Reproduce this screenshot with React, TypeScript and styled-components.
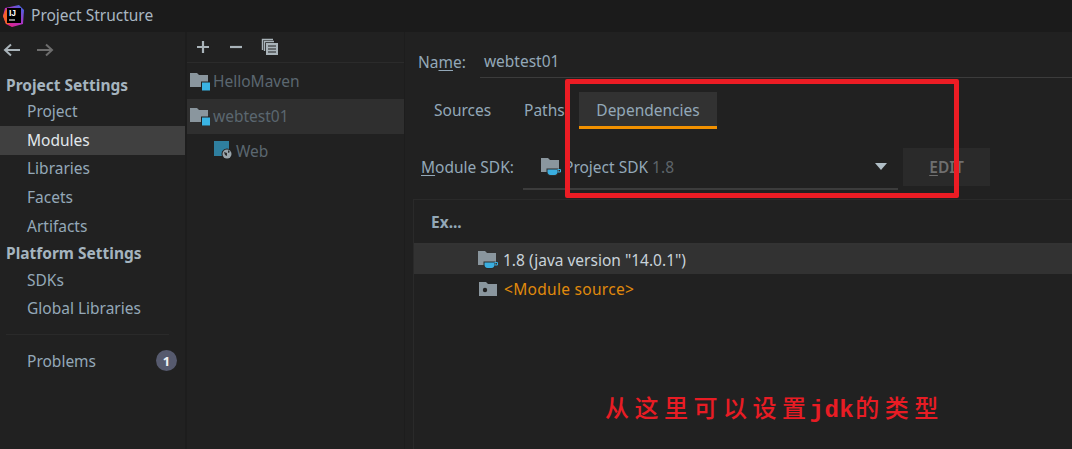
import React from "react";
import styled, { createGlobalStyle } from "styled-components";

const Global = createGlobalStyle`
  html, body { margin: 0; padding: 0; background: #212121; }
  * { box-sizing: border-box; }
`;

const Window = styled.div`
  position: relative;
  width: 1072px;
  height: 449px;
  overflow: hidden;
  background: #212121;
  color: #a5b4bf;
  font-family: "Noto Sans", "Open Sans", "Noto Sans CJK SC", sans-serif;
  font-size: 15.5px;
  display: flex;
  flex-direction: column;
`;
const TitleBar = styled.div`
  height: 32px;
  flex: none;
  background: #1b1b1b;
  display: flex;
  align-items: center;
  gap: 6px;
  padding: 0 0 2px 2px;
  color: #a9b7c2;
`;
const Body = styled.div`
  flex: 1;
  display: flex;
  min-height: 0;
`;
const Sidebar = styled.aside`
  width: 187px;
  flex: none;
  border-right: 2px solid #1d1d1d;
  display: flex;
  flex-direction: column;
`;
const NavBar = styled.div`
  height: 40px;
  display: flex;
  align-items: center;
  gap: 15px;
  padding: 0 0 4px 3px;
`;
const SectionTitle = styled.div`
  height: 25.5px;
  display: flex;
  align-items: center;
  padding-left: 6px;
  font-weight: 700;
  color: #a5b4bf;
`;
const NavItem = styled.div<{ $active?: boolean }>`
  height: 28.6px;
  display: flex;
  align-items: center;
  padding: 0 8px 1px 27px;
  color: ${(p) => (p.$active ? "#e2e8ec" : "#94a8b8")};
  background: ${(p) => (p.$active ? "#404040" : "transparent")};
`;
const NavRule = styled.div`
  height: 1px;
  margin: 11px 16px 12px 6px;
  background: #2a2a2a;
`;
const Badge = styled.span`
  margin-left: auto;
  width: 21px;
  height: 21px;
  border-radius: 50%;
  background: #565a6e;
  color: #eef0f2;
  font-size: 13px;
  font-weight: 700;
  display: flex;
  align-items: center;
  justify-content: center;
`;
const ModuleColumn = styled.section`
  width: 218px;
  flex: none;
  border-right: 1px solid #1d1d1d;
  display: flex;
  flex-direction: column;
`;
const ModuleTools = styled.div`
  height: 31px;
  flex: none;
  border-bottom: 1px solid #2b2b2b;
  display: flex;
  align-items: center;
  gap: 17px;
  padding: 0 0 1px 8px;
  margin-bottom: 1px;
`;
const TreeRow = styled.div<{ $active?: boolean; $indent?: number; $gap?: number }>`
  height: 35px;
  display: flex;
  align-items: center;
  gap: ${(p) => p.$gap ?? 3}px;
  padding: 0 0 2px ${(p) => p.$indent ?? 3}px;
  color: #5b6770;
  background: ${(p) => (p.$active ? "#2f2f2f" : "transparent")};
`;
const Details = styled.main`
  flex: 1;
  min-width: 0;
  display: flex;
  flex-direction: column;
`;
const NameRow = styled.div`
  height: 46px;
  flex: none;
  padding: 13px 0 0 13px;
  display: flex;
  align-items: center;
  gap: 14px;
`;
const FieldLabel = styled.span`
  color: #93a8b8;
`;
const Underlined = styled.span`
  text-decoration: underline;
  text-underline-offset: 2px;
  text-decoration-thickness: 1px;
`;
const NameField = styled.div`
  flex: 1;
  height: 33px;
  padding: 0 0 0 4px;
  display: flex;
  align-items: center;
  border-bottom: 1px solid #3c3c3c;
  color: #93a8b8;
`;
const Tabs = styled.div`
  display: flex;
  margin: 14px 0 0 29px;
  height: 37px;
  flex: none;
  align-items: stretch;
`;
const Tab = styled.div<{ $active?: boolean; $width: number }>`
  width: ${(p) => p.$width}px;
  display: flex;
  align-items: center;
  padding-top: 2px;
  justify-content: ${(p) => (p.$active ? "center" : "flex-start")};
  color: #93a8b8;
  background: ${(p) => (p.$active ? "#323232" : "transparent")};
  border-bottom: 3px solid ${(p) => (p.$active ? "#f29100" : "transparent")};
`;
const SdkRow = styled.div`
  height: 38px;
  margin-top: 20px;
  flex: none;
  display: flex;
  align-items: center;
  padding-left: 16px;
`;
const SdkLabel = styled(FieldLabel)`
  width: 102px;
  flex: none;
  padding-bottom: 2px;
`;
const SdkSelect = styled.div`
  width: 375px;
  height: 41px;
  margin-top: 3px;
  flex: none;
  display: flex;
  align-items: center;
  gap: 3px;
  padding: 0 11px 4px 18px;
  border-bottom: 2px solid #3c3c3c;
  color: #93a8b8;
`;
const Muted = styled.span`
  color: #5d6469;
`;
const Caret = styled.span`
  margin-left: auto;
  width: 0;
  height: 0;
  border-left: 6px solid transparent;
  border-right: 6px solid transparent;
  border-top: 7px solid #b0bec6;
`;
const EditButton = styled.div`
  width: 87px;
  height: 38px;
  margin: 0 0 2px 5px;
  background: #2a2a2a;
  color: #6f6f6f;
  font-weight: 600;
  display: flex;
  align-items: center;
  justify-content: center;
`;
const TablePanel = styled.div`
  margin: 12px 0 0 8px;
  flex: 1;
  border-top: 1px solid #2a2a2a;
  border-left: 1px solid #2a2a2a;
  display: flex;
  flex-direction: column;
`;
const TableHead = styled.div`
  height: 45px;
  flex: none;
  border-bottom: 2px solid #333;
  padding-left: 17px;
  display: flex;
  align-items: center;
  font-weight: 700;
  color: #93a8b8;
`;
const TableRow = styled.div<{ $active?: boolean }>`
  height: 29px;
  flex: none;
  display: flex;
  align-items: center;
  gap: 5px;
  padding-left: 64px;
  background: ${(p) => (p.$active ? "#323232" : "transparent")};
  color: #c9d3da;
`;
const SourceText = styled.span`
  color: #e08a0c;
  margin-left: 1px;
  letter-spacing: 0.3px;
`;
const Highlight = styled.div`
  position: absolute;
  left: 565px;
  top: 79px;
  width: 394px;
  height: 119px;
  border: 5px solid #ec1c24;
  border-radius: 2px;
  pointer-events: none;
`;
const Note = styled.div`
  position: absolute;
  left: 605px;
  top: 389px;
  color: #e81c24;
  font-family: "Noto Sans CJK SC", sans-serif;
  font-size: 24px;
  font-weight: 500;
  line-height: 36px;
  letter-spacing: 5.5px;
  white-space: nowrap;
`;
const NoteLatin = styled.span`
  font-family: "Liberation Mono", monospace;
  font-weight: 700;
  letter-spacing: 0.5px;
  margin: 0 1px 0 -2px;
`;

const Logo = () => (
  <svg width="23" height="24" viewBox="0 0 23 24">
    <defs>
      <linearGradient id="lg" x1="0" y1="1" x2="1" y2="0">
        <stop offset="0" stopColor="#f5206a" />
        <stop offset="0.5" stopColor="#b42fc0" />
        <stop offset="1" stopColor="#2f6fe8" />
      </linearGradient>
    </defs>
    <path d="M3 5 L17 2 L22 7 L21 21 L10 24 L4 21 L1 13 Z" fill="url(#lg)" />
    <path d="M1 13 L4 6 L7 8 L8 21 L4 21 Z" fill="#f4622a" />
    <rect x="5" y="5" width="14" height="15" fill="#000" />
    <text x="7" y="13" fontSize="8.500" fontWeight="700" fill="#fff" fontFamily="Liberation Sans">IJ</text>
    <rect x="7" y="16.500" width="6" height="1" fill="#fff" />
  </svg>
);
const Arrow = ({ flip, color }: { flip?: boolean; color: string }) => (
  <svg width="18" height="14" viewBox="0 0 18 14" style={{ transform: flip ? "scaleX(-1)" : undefined }}>
    <path d="M17 7H2M8 1.500L2 7l6 5.500" fill="none" stroke={color} strokeWidth="2" />
  </svg>
);
const Plus = () => (
  <svg width="16" height="16" viewBox="0 0 16 16"><path d="M8 2v12M2 8h12" stroke="#a9b3b9" strokeWidth="2.200" /></svg>
);
const Minus = () => (
  <svg width="16" height="16" viewBox="0 0 16 16"><path d="M2 8h12" stroke="#a9b3b9" strokeWidth="2.200" /></svg>
);
const Copy = () => (
  <svg width="18" height="18" viewBox="0 0 18 18">
    <path d="M1.500 12V1.500H12" fill="none" stroke="#a9b3b9" strokeWidth="1.400" />
    <path d="M3.500 13V3.500H13" fill="none" stroke="#a9b3b9" strokeWidth="1.400" />
    <rect x="5" y="5" width="12" height="12" fill="#a9b3b9" />
    <path d="M7 8h8M7 11h8M7 14h8" stroke="#212121" strokeWidth="1" />
  </svg>
);
const ModuleFolder = () => (
  <svg width="20" height="20" viewBox="0 0 20 20" style={{ flex: "none" }}>
    <path d="M0 2h7l2 2h9v12H0z" fill="#8a969e" />
    <rect x="11" y="10.500" width="9" height="9" fill="#212121" />
    <rect x="12" y="11.500" width="8" height="8" fill="#3ab4e4" />
  </svg>
);
const SdkFolder = () => (
  <svg width="20" height="20" viewBox="0 0 20 20" style={{ flex: "none" }}>
    <path d="M0 1h7l2 2h9v12H0z" fill="#8a969e" />
    <path d="M5.500 11.500h12v3c0 2.500-1.500 4.500-4 4.500h-4c-2.500 0-4-2-4-4.500z" fill="#2c2c2c" />
    <path d="M6.500 12.500h10v2c0 2-1 3.500-3 3.500h-4c-2 0-3-1.500-3-3.500z" fill="#3aaee0" />
    <path d="M16.500 12.500h3v2.500h-3" fill="none" stroke="#3aaee0" strokeWidth="1" />
  </svg>
);
const SourceFolder = () => (
  <svg width="20" height="20" viewBox="0 0 20 20" style={{ flex: "none" }}>
    <path d="M1 3h7l2 2h9v12H1z" fill="#8a969e" />
    <circle cx="7" cy="11" r="2.200" fill="#212121" />
  </svg>
);
const WebIcon = () => (
  <svg width="20" height="19" viewBox="0 0 20 19" style={{ flex: "none" }}>
    <rect x="0" y="0" width="15" height="15" fill="#2f7f9f" />
    <circle cx="13" cy="13" r="5.500" fill="#212121" />
    <circle cx="13" cy="13" r="4.500" fill="#9aa5ab" />
    <path d="M10 11l3 1 0 3-2-1zM14 9l2 2-2 1z" fill="#2c2c2c" />
  </svg>
);

export default function App() {
  return (
    <Window>
      <Global />
      <TitleBar>
        <Logo />
        <span>Project Structure</span>
      </TitleBar>
      <Body>
        <Sidebar>
          <NavBar>
            <Arrow color="#a9b3b9" />
            <Arrow flip color="#6d6d6d" />
          </NavBar>
          <SectionTitle>Project Settings</SectionTitle>
          <NavItem>Project</NavItem>
          <NavItem $active>Modules</NavItem>
          <NavItem>Libraries</NavItem>
          <NavItem>Facets</NavItem>
          <NavItem>Artifacts</NavItem>
          <SectionTitle>Platform Settings</SectionTitle>
          <NavItem>SDKs</NavItem>
          <NavItem>Global Libraries</NavItem>
          <NavRule />
          <NavItem>
            Problems
            <Badge>1</Badge>
          </NavItem>
        </Sidebar>
        <ModuleColumn>
          <ModuleTools>
            <Plus />
            <Minus />
            <Copy />
          </ModuleTools>
          <TreeRow>
            <ModuleFolder />
            HelloMaven
          </TreeRow>
          <TreeRow $active>
            <ModuleFolder />
            webtest01
          </TreeRow>
          <TreeRow $indent={27} $gap={2}>
            <WebIcon />
            Web
          </TreeRow>
        </ModuleColumn>
        <Details>
          <NameRow>
            <FieldLabel>
              Na<Underlined>m</Underlined>e:
            </FieldLabel>
            <NameField>webtest01</NameField>
          </NameRow>
          <Tabs>
            <Tab $width={90}>Sources</Tab>
            <Tab $width={55}>Paths</Tab>
            <Tab $active $width={138}>Dependencies</Tab>
          </Tabs>
          <SdkRow>
            <SdkLabel>
              <Underlined>M</Underlined>odule SDK:
            </SdkLabel>
            <SdkSelect>
              <SdkFolder />
              <span>
                Project SDK <Muted>1.8</Muted>
              </span>
              <Caret />
            </SdkSelect>
            <EditButton>
              <Underlined>E</Underlined>DIT
            </EditButton>
          </SdkRow>
          <TablePanel>
            <TableHead>Ex...</TableHead>
            <TableRow $active>
              <SdkFolder />
              1.8 (java version "14.0.1")
            </TableRow>
            <TableRow>
              <SourceFolder />
              <SourceText>&lt;Module source&gt;</SourceText>
            </TableRow>
          </TablePanel>
        </Details>
      </Body>
      <Highlight />
      <Note>
        从这里可以设置<NoteLatin>jdk</NoteLatin>的类型
      </Note>
    </Window>
  );
}
